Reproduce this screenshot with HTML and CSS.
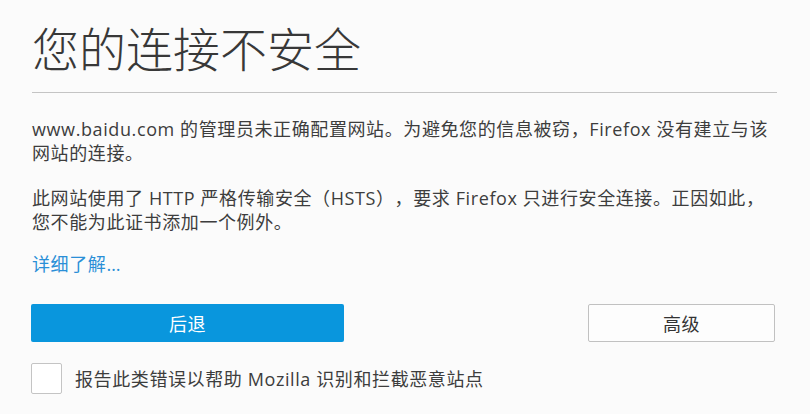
FILE: index.html
```html
<!DOCTYPE html>
<html lang="zh-CN">
<head>
<meta charset="utf-8">
<title>您的连接不安全</title>
<link rel="stylesheet" href="styles.css">
</head>
<body>
<main class="page">
  <h1 class="title">您的连接不安全</h1>
  <p class="desc first">www.baidu.com 的管理员未正确配置网站。为避免您的信息被窃，Firefox 没有建立与该网站的连接。</p>
  <p class="desc second">此网站使用了 HTTP 严格传输安全（HSTS），要求 Firefox 只进行安全连接。正因如此，您不能为此证书添加一个例外。</p>
  <a class="learn" href="#">详细了解…</a>
  <div class="actions">
    <button class="btn primary" type="button">后退</button>
    <button class="btn secondary" type="button">高级</button>
  </div>
  <label class="report">
    <span class="check"></span>
    <span class="report-text">报告此类错误以帮助 Mozilla 识别和拦截恶意站点</span>
  </label>
</main>
</body>
</html>
```
FILE: styles.css
```css
html, body {
  margin: 0;
  background: #fbfbfb;
}
body {
  font-family: "Open Sans", "Noto Sans CJK SC", sans-serif;
  font-size: 18px;
  letter-spacing: 0.6px;
  text-spacing-trim: space-all;
  color: #3d3d3d;
}
.page {
  width: 745px;
  padding: 19px 0 0 32px;
}
.title {
  margin: 0;
  font-family: "Noto Sans CJK SC", sans-serif;
  font-size: 47px;
  font-weight: 300;
  letter-spacing: 0;
  line-height: 56px;
  color: #383838;
  padding-bottom: 17px;
  border-bottom: 1px solid #c4c4c4;
}
.desc {
  margin: 0;
  line-height: 24px;
}
.desc.first {
  margin-top: 24px;
}
.desc.second {
  margin-top: 21px;
}
.learn {
  display: block;
  margin-top: 18px;
  line-height: 24px;
  color: #2a8fd7;
  text-decoration: none;
}
.actions {
  display: flex;
  justify-content: space-between;
  margin-top: 28px;
  margin-left: -1px;
  padding-right: 2px;
}
.btn {
  height: 38px;
  font-family: "Noto Sans CJK SC", sans-serif;
  font-size: 18px;
  letter-spacing: 0.6px;
  border-radius: 2px;
  padding: 0;
  cursor: pointer;
}
.primary {
  width: 313px;
  background: #0996dd;
  color: #fff;
  border: none;
}
.secondary {
  width: 187px;
  background: #fdfdfd;
  color: #333;
  border: 1px solid #c1c1c1;
}
.report {
  display: flex;
  align-items: center;
  gap: 13px;
  margin-top: 21px;
  margin-left: -1px;
}
.check {
  width: 29px;
  height: 29px;
  background: #fff;
  border: 1px solid #c4c4c4;
  border-radius: 2px;
  flex: none;
}
.report-text {
  line-height: 24px;
  color: #3d3d3d;
}
```
